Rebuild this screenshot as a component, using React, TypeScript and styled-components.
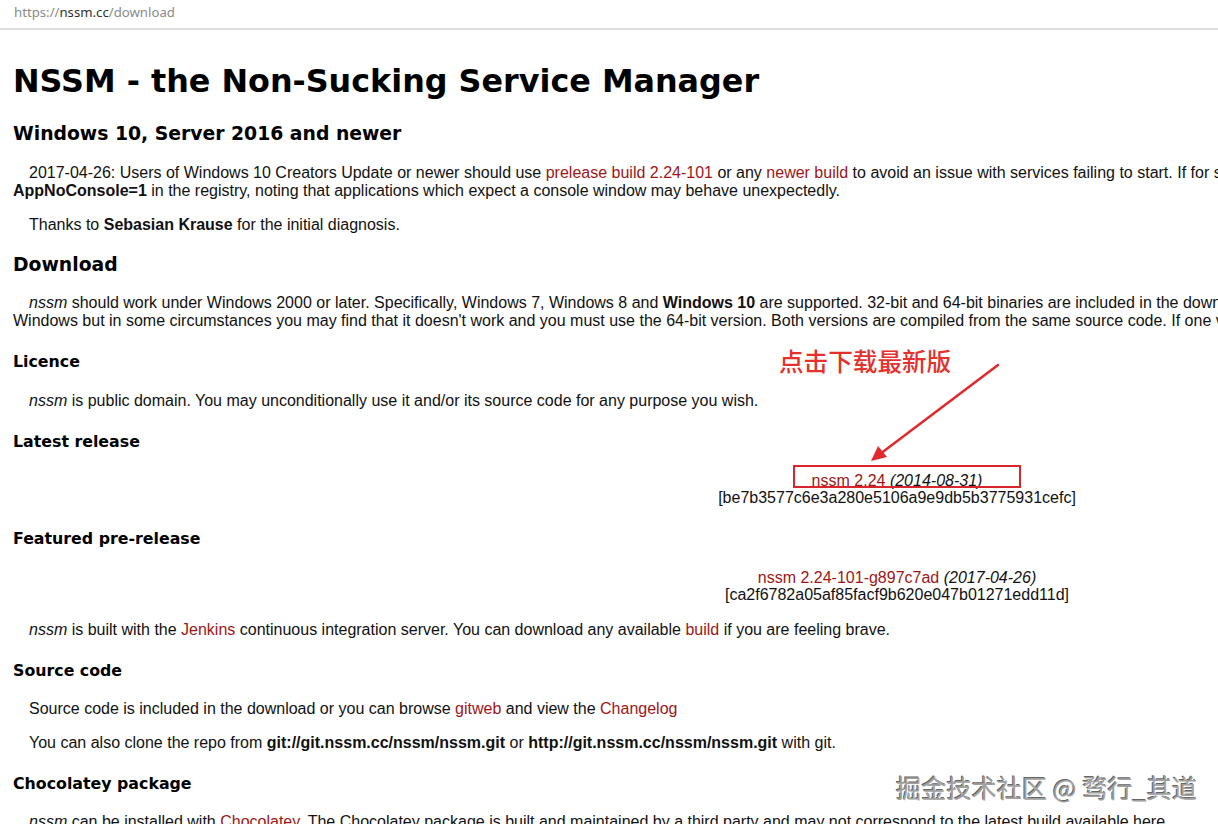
import React from 'react';
import styled, { createGlobalStyle } from 'styled-components';

const GlobalStyle = createGlobalStyle`
  html, body {
    margin: 0;
    padding: 0;
    background: #ffffff;
  }
`;

const Viewport = styled.div`
  position: relative;
  width: 1218px;
  height: 824px;
  overflow: hidden;
  background: #ffffff;
`;

const AddressBar = styled.div`
  height: 28px;
  padding-left: 14px;
  border-bottom: 2px solid #dedede;
  font-family: 'Noto Sans', 'Open Sans', sans-serif;
  font-size: 13.2px;
  line-height: 24px;
  color: #8a8a8a;
  box-sizing: content-box;
`;

const Host = styled.span`
  color: #303030;
`;

const Page = styled.div`
  width: 1768px;
  padding: 0 13px;
  font-family: 'Liberation Sans', Arial, sans-serif;
  font-size: 16px;
  color: #111;
`;

const Title = styled.h1`
  margin: 31px 0 0;
  font-family: 'DejaVu Sans', Verdana, sans-serif;
  font-size: 31.8px;
  line-height: 40px;
  font-weight: bold;
  color: #000;
`;

const Heading = styled.h2<{ $top?: number }>`
  margin: ${(p) => p.$top ?? 20}px 0 0;
  font-family: 'DejaVu Sans', Verdana, sans-serif;
  font-size: 18.8px;
  line-height: 24px;
  font-weight: bold;
  color: #000;
`;

const SubHeading = styled.h3`
  margin: 22px 0 0;
  font-family: 'DejaVu Sans', Verdana, sans-serif;
  font-size: 15.8px;
  line-height: 20px;
  font-weight: bold;
  color: #000;
`;

const Para = styled.p<{ $top?: number }>`
  margin: ${(p) => p.$top ?? 16}px 0 0;
  line-height: 18px;
  text-indent: 16px;
  white-space: nowrap;
`;

const Release = styled.div`
  margin: 20px 0 0;
  padding-bottom: 1px;
  line-height: 17px;
  text-align: center;
`;

const Link = styled.a`
  color: #9e1616;
  text-decoration: none;
`;

const Overlay = styled.div`
  position: absolute;
  left: 0;
  top: 0;
  width: 1218px;
  height: 824px;
  pointer-events: none;
`;

const Callout = styled.div`
  position: absolute;
  left: 779px;
  top: 345px;
  font-family: 'Noto Sans CJK SC', sans-serif;
  font-size: 24.6px;
  line-height: 30px;
  font-weight: 500;
  color: #e5312c;
`;

const Highlight = styled.div`
  position: absolute;
  left: 793px;
  top: 465px;
  width: 224px;
  height: 19px;
  border: 2px solid #d8262c;
`;

const Watermark = styled.div`
  position: absolute;
  left: 896px;
  top: 771px;
  font-family: 'Noto Sans CJK SC', sans-serif;
  font-size: 25.2px;
  line-height: 32px;
  color: #a0a0a0;
  text-shadow: 1px 1px 0 #ffffff, -1px -1px 0 #666666;
`;

const App: React.FC = function () {
  return (
    <Viewport>
      <GlobalStyle />
      <AddressBar>
        https://<Host>nssm.cc</Host>/download
      </AddressBar>
      <Page>
        <Title>NSSM - the Non-Sucking Service Manager</Title>
        <Heading $top={21}>Windows 10, Server 2016 and newer</Heading>
        <Para $top={18}>
          2017-04-26: Users of Windows 10 Creators Update or newer should use{' '}
          <Link href="#">prelease build 2.24-101</Link> or any{' '}
          <Link href="#">newer build</Link> to avoid an issue with services
          failing to start. If for some reason you cannot use that build you can also set
          <br />
          <b>AppNoConsole=1</b> in the registry, noting that applications which
          expect a console window may behave unexpectedly.
        </Para>
        <Para>
          Thanks to <b>Sebasian Krause</b> for the initial diagnosis.
        </Para>
        <Heading $top={19}>Download</Heading>
        <Para $top={17}>
          <i>nssm</i> should work under Windows 2000 or later. Specifically,
          Windows 7, Windows 8 and <b>Windows 10</b> are supported. 32-bit and
          64-bit binaries are included in the download. In general you should
          try to use the 64-bit version on 64-bit
          <br />
          Windows but in some circumstances you may find that it doesn't work
          and you must use the 64-bit version. Both versions are compiled from
          the same source code. If one version doesn't work for you, try the other.
        </Para>
        <SubHeading>Licence</SubHeading>
        <Para $top={20}>
          <i>nssm</i> is public domain. You may unconditionally use it and/or
          its source code for any purpose you wish.
        </Para>
        <SubHeading>Latest release</SubHeading>
        <Release>
          <Link href="#">nssm 2.24</Link> <i>(2014-08-31)</i>
          <br />
          [be7b3577c6e3a280e5106a9e9db5b3775931cefc]
        </Release>
        <SubHeading>Featured pre-release</SubHeading>
        <Release>
          <Link href="#">nssm 2.24-101-g897c7ad</Link> <i>(2017-04-26)</i>
          <br />
          [ca2f6782a05af85facf9b620e047b01271edd11d]
        </Release>
        <Para $top={17}>
          <i>nssm</i> is built with the <Link href="#">Jenkins</Link> continuous
          integration server. You can download any available{' '}
          <Link href="#">build</Link> if you are feeling brave.
        </Para>
        <SubHeading>Source code</SubHeading>
        <Para $top={19}>
          Source code is included in the download or you can browse{' '}
          <Link href="#">gitweb</Link> and view the{' '}
          <Link href="#">Changelog</Link>
        </Para>
        <Para>
          You can also clone the repo from{' '}
          <b>git://git.nssm.cc/nssm/nssm.git</b> or{' '}
          <b>http://git.nssm.cc/nssm/nssm.git</b> with git.
        </Para>
        <SubHeading>Chocolatey package</SubHeading>
        <Para $top={19}>
          <i>nssm</i> can be installed with <Link href="#">Chocolatey</Link>.
          The Chocolatey package is built and maintained by a third party and
          may not correspond to the latest build available here.
        </Para>
      </Page>
      <Overlay>
        <Callout>点击下载最新版</Callout>
        <svg width="1218" height="824" style={{ position: 'absolute', left: 0, top: 0 }}>
          <line x1="998" y1="365" x2="880" y2="454" stroke="#e0292e" strokeWidth="2.5" strokeLinecap="round" />
          <polygon points="871,461 878,446 887,457" fill="#e0292e" />
        </svg>
        <Highlight />
        <Watermark>掘金技术社区 @ 骛行_其道</Watermark>
      </Overlay>
    </Viewport>
  );
};

export default App;
